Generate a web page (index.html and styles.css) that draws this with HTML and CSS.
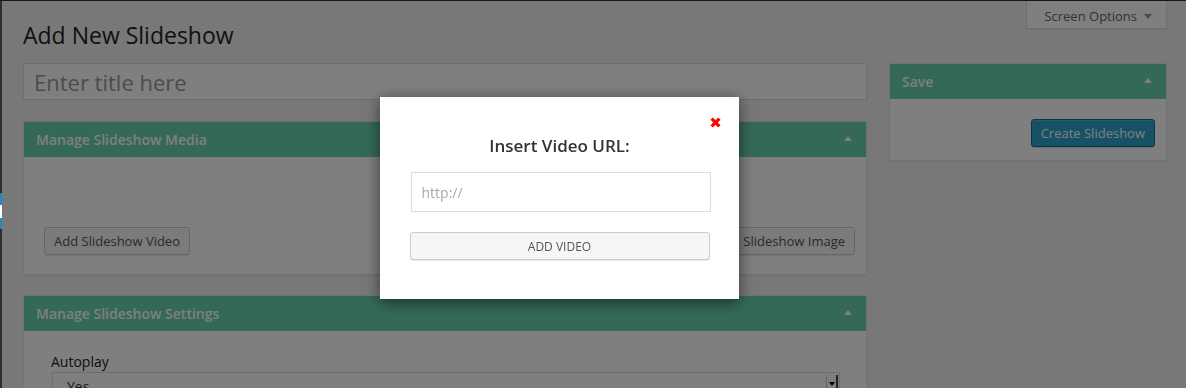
FILE: index.html
```html
<!DOCTYPE html>
<html lang="en">
<head>
<meta charset="UTF-8" />
<title>Add New Slideshow</title>
<link rel="stylesheet" href="styles.css">
</head>
<body>

<div class="adminbar"></div>

<div class="layout">
  <!-- visible edge of the admin menu -->
  <div class="adminmenu">
    <div class="menu-current"><span class="menu-arrow"></span></div>
  </div>

  <div class="wrap">
    <div class="top-row">
      <h1>Add New Slideshow</h1>
      <div class="screen-options">Screen Options <span class="down-arrow"></span></div>
    </div>

    <div class="columns">
      <div class="main-col">
        <input type="text" class="title-input" placeholder="Enter title here" />

        <div class="postbox">
          <div class="postbox-head">Manage Slideshow Media <span class="up-arrow"></span></div>
          <div class="postbox-body media-body">
            <div class="media-list"></div>
            <div class="media-actions">
              <button class="button">Add Slideshow Video</button>
              <button class="button">Add Slideshow Image</button>
            </div>
          </div>
        </div>

        <div class="postbox">
          <div class="postbox-head">Manage Slideshow Settings <span class="up-arrow"></span></div>
          <div class="postbox-body settings-body">
            <label class="field-label">Autoplay</label>
            <div class="select-box">
              <span>Yes</span>
              <span class="select-btn"><span class="select-tri"></span></span>
            </div>
          </div>
        </div>
      </div>

      <div class="side-col">
        <div class="postbox">
          <div class="postbox-head">Save <span class="up-arrow"></span></div>
          <div class="postbox-body save-body">
            <button class="button button-primary">Create Slideshow</button>
          </div>
        </div>
      </div>
    </div>
  </div>
</div>

<div class="overlay"></div>

<!-- Insert video popup -->
<div class="modal">
  <a class="modal-close" href="#">
    <svg viewBox="0 0 10 10" width="11" height="11">
      <line x1="1.5" y1="1.5" x2="8.5" y2="8.5" stroke="#ff0000" stroke-width="3" />
      <line x1="8.5" y1="1.5" x2="1.5" y2="8.5" stroke="#ff0000" stroke-width="3" />
    </svg>
  </a>
  <h2>Insert Video URL:</h2>
  <input type="text" class="url-input" placeholder="http://" />
  <button class="add-video">ADD VIDEO</button>
</div>

</body>
</html>
```

FILE: styles.css
```css
body {
  margin: 0;
  background: #f1f1f1;
  font-family: 'Open Sans', sans-serif;
  color: #222;
  height: 388px;
  overflow: hidden;
}
.adminbar {
  height: 1px;
  background: #2d2d2d;
}
.layout {
  display: flex;
}
.adminmenu {
  width: 2px;
  height: 387px;
  background: #2d2d2d;
  position: relative;
  z-index: 2;
  flex-shrink: 0;
}
.menu-current {
  margin-top: 192px;
  height: 36px;
  background: #1e8cbe;
  display: flex;
  align-items: center;
}
.menu-arrow {
  display: block;
  width: 2px;
  height: 13px;
  background: #fff;
}
.wrap {
  flex: 1;
  padding: 0 19px 0 21px;
}
.top-row {
  display: flex;
  justify-content: space-between;
  align-items: flex-start;
}
h1 {
  margin: 20px 0 0;
  font-size: 23px;
  font-weight: 400;
  line-height: 29px;
  color: #222;
}
.screen-options {
  height: 28px;
  box-sizing: border-box;
  padding: 3px 14px 0 17px;
  background: #fff;
  border: 1px solid #ddd;
  border-top: none;
  font-size: 13px;
  color: #666;
  white-space: nowrap;
  display: flex;
  align-items: center;
  gap: 7px;
  box-shadow: 0 1px 1px rgba(0,0,0,0.04);
}
.down-arrow {
  width: 0;
  height: 0;
  border-left: 4px solid transparent;
  border-right: 4px solid transparent;
  border-top: 5px solid #999;
}
.columns {
  margin-top: 13px;
  display: grid;
  grid-template-columns: 844px 278px;
  gap: 22px;
  align-items: start;
}
.title-input {
  display: block;
  width: 100%;
  height: 37px;
  box-sizing: border-box;
  margin: 0 0 21px;
  padding: 0 10px;
  border: 1px solid #ddd;
  background: #fff;
  font-family: 'Open Sans', sans-serif;
  font-size: 22px;
  outline: none;
}
.title-input::placeholder {
  color: #999;
}
.postbox {
  background: #fff;
  border: 1px solid #e5e5e5;
  box-shadow: 0 1px 1px rgba(0,0,0,0.04);
  margin-bottom: 20px;
}
.postbox-head {
  height: 35px;
  background: #68d2b0;
  color: #fff;
  font-size: 14px;
  font-weight: 600;
  line-height: 19px;
  padding: 0 14px 0 12px;
  display: flex;
  align-items: center;
  justify-content: space-between;
}
.up-arrow {
  width: 0;
  height: 0;
  border-left: 4px solid transparent;
  border-right: 4px solid transparent;
  border-bottom: 5px solid #fff;
  margin-top: -3px;
}
.media-body {
  padding: 12px 11px 19px 20px;
}
.media-list {
  height: 58px;
}
.media-actions {
  display: flex;
  justify-content: space-between;
}
.button {
  height: 28px;
  padding: 0 9px;
  border: 1px solid #ccc;
  border-radius: 3px;
  background: #f7f7f7;
  color: #555;
  font-family: 'Open Sans', sans-serif;
  font-size: 13px;
  box-shadow: inset 0 1px 0 #fff, 0 1px 0 rgba(0,0,0,0.08);
  cursor: pointer;
}
.button-primary {
  background: #2ea2cc;
  border-color: #0074a2;
  color: #fff;
  box-shadow: inset 0 1px 0 rgba(120,200,230,0.5), 0 1px 0 rgba(0,0,0,0.15);
}
.settings-body {
  padding: 21px 26px 20px 27px;
}
.field-label {
  display: block;
  font-size: 14px;
  line-height: 19px;
  color: #222;
  margin-bottom: 1px;
}
.select-box {
  margin-left: 1px;
  width: 788px;
  height: 28px;
  box-sizing: border-box;
  border: 1px solid #ddd;
  background: #fff;
  font-size: 14px;
  color: #333;
  padding-left: 14px;
  display: flex;
  align-items: center;
  justify-content: space-between;
}
.select-btn {
  align-self: stretch;
  width: 9px;
  margin: 2px 1px 0;
  background: #fff;
  border-left: 1px solid #ccc;
  border-right: 2px solid #444;
  display: flex;
  justify-content: center;
  padding-top: 7px;
}
.select-tri {
  width: 0;
  height: 0;
  border-left: 3px solid transparent;
  border-right: 3px solid transparent;
  border-top: 4px solid #000;
}
.save-body {
  padding: 20px 11px 13px;
  display: flex;
  justify-content: flex-end;
}
.overlay {
  position: fixed;
  top: 0;
  left: 0;
  right: 0;
  bottom: 0;
  background: rgba(0,0,0,0.5);
  z-index: 1;
}
.modal {
  position: absolute;
  left: 380px;
  top: 97px;
  width: 359px;
  height: 202px;
  box-sizing: border-box;
  background: #fff;
  box-shadow: 0 3px 14px rgba(0,0,0,0.55);
  z-index: 3;
  padding-top: 37px;
  display: flex;
  flex-direction: column;
  align-items: center;
}
.modal-close {
  position: absolute;
  top: 20px;
  right: 18px;
  display: block;
  width: 11px;
  height: 11px;
  line-height: 0;
}
.modal h2 {
  margin: 0;
  font-size: 17px;
  font-weight: 600;
  line-height: 24px;
  color: #333;
}
.url-input {
  margin: 14px 0 0 2px;
  width: 300px;
  height: 40px;
  box-sizing: border-box;
  padding: 0 10px;
  border: 1px solid #ddd;
  font-family: 'Open Sans', sans-serif;
  font-size: 14px;
  outline: none;
}
.url-input::placeholder {
  color: #aaa;
}
.add-video {
  margin-top: 20px;
  width: 300px;
  height: 28px;
  border: 1px solid #ccc;
  border-radius: 3px;
  background: #f6f6f6;
  color: #555;
  font-family: 'Open Sans', sans-serif;
  font-size: 12px;
  box-shadow: 0 1px 0 rgba(0,0,0,0.08);
  cursor: pointer;
}
```
